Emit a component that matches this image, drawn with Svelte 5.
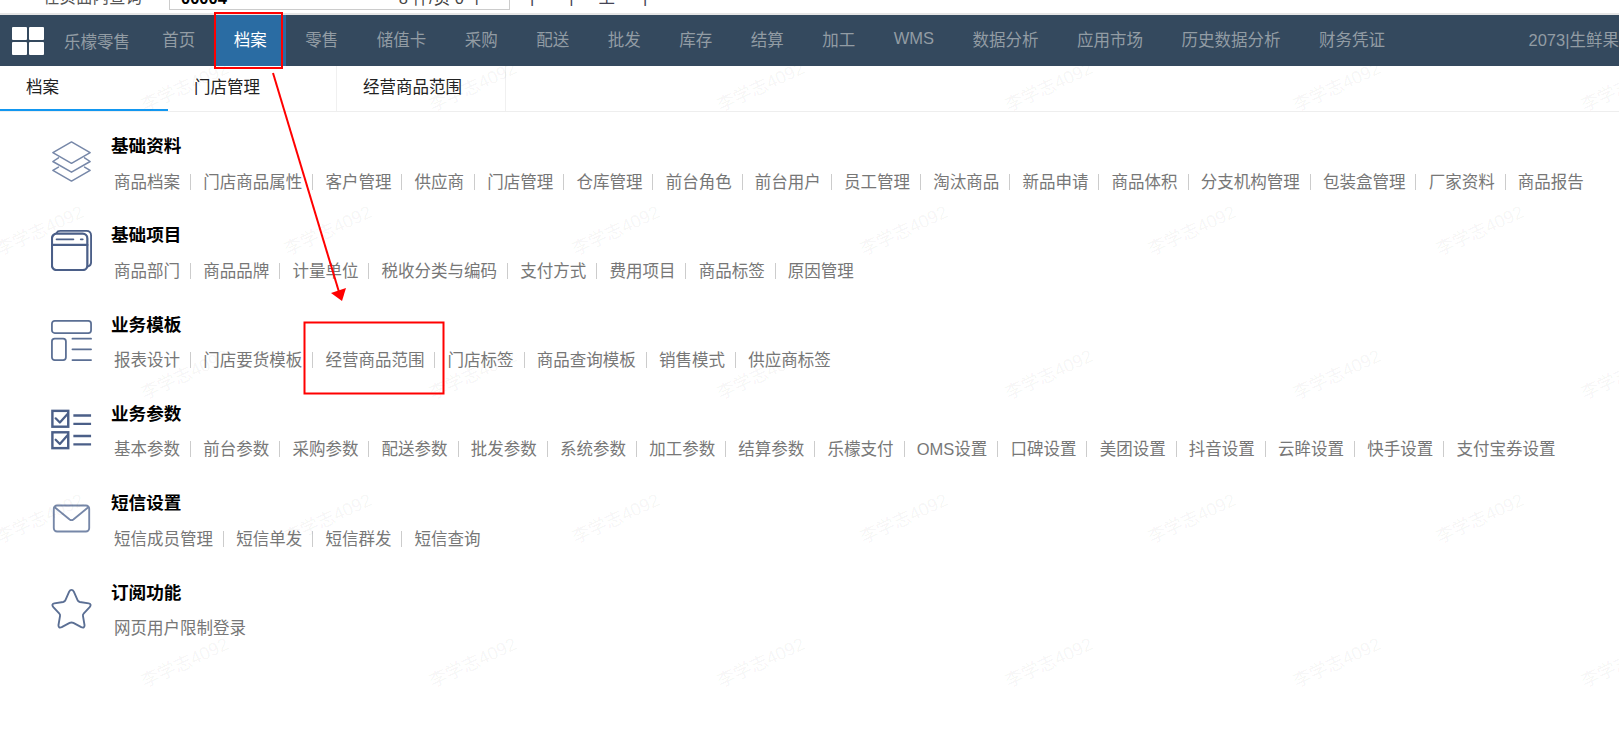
<script>
	const nav = [
		{ label: '首页' },
		{ label: '档案', active: true },
		{ label: '零售' },
		{ label: '储值卡' },
		{ label: '采购' },
		{ label: '配送' },
		{ label: '批发' },
		{ label: '库存' },
		{ label: '结算' },
		{ label: '加工' },
		{ label: 'WMS', lift: true },
		{ label: '数据分析' },
		{ label: '应用市场' },
		{ label: '历史数据分析' },
		{ label: '财务凭证' }
	]

	const groups = [
		{
			title: '基础资料',
			icon: 'layers',
			links: ['商品档案', '门店商品属性', '客户管理', '供应商', '门店管理', '仓库管理', '前台角色', '前台用户', '员工管理', '淘汰商品', '新品申请', '商品体积', '分支机构管理', '包装盒管理', '厂家资料', '商品报告']
		},
		{
			title: '基础项目',
			icon: 'window',
			links: ['商品部门', '商品品牌', '计量单位', '税收分类与编码', '支付方式', '费用项目', '商品标签', '原因管理']
		},
		{
			title: '业务模板',
			icon: 'template',
			links: ['报表设计', '门店要货模板', '经营商品范围', '门店标签', '商品查询模板', '销售模式', '供应商标签']
		},
		{
			title: '业务参数',
			icon: 'checks',
			links: ['基本参数', '前台参数', '采购参数', '配送参数', '批发参数', '系统参数', '加工参数', '结算参数', '乐檬支付', 'OMS设置', '口碑设置', '美团设置', '抖音设置', '云眸设置', '快手设置', '支付宝券设置']
		},
		{ title: '短信设置', icon: 'mail', links: ['短信成员管理', '短信单发', '短信群发', '短信查询'] },
		{ title: '订阅功能', icon: 'star', links: ['网页用户限制登录'] }
	]

	// watermark tiles, staggered rows
	const marks = []
	for (let row = 0; row < 5; row++) {
		const off = row % 2 === 1 ? -8 : 137
		for (let col = -1; col < 6; col++) {
			marks.push({ x: off + col * 288, y: 72 + row * 144 })
		}
	}
</script>

<div class="page">
	<div class="search-strip">
		<span class="search-label">在页面内查询</span>
		<div class="search-box"><b>00004</b><span>8 件/页 0 个</span></div>
		<div class="strip-rest"><span>|</span><span>|</span><span>至</span><span>|</span></div>
	</div>

	<header class="topbar">
		<div class="logo"><i></i><i></i><i></i><i></i></div>
		<span class="brand">乐檬零售</span>
		{#each nav as item}
			<span class="nav-item" class:active={item.active} class:lift={item.lift}>{item.label}</span>
		{/each}
		<span class="user">2073|生鲜果</span>
	</header>

	<div class="tabs">
		<span class="tab current">档案</span>
		<span class="tab">门店管理</span>
		<span class="tab">经营商品范围</span>
	</div>

	<main class="groups">
		{#each groups as group}
			<section class="group">
				<svg class="icon" viewBox="0 0 44 44" fill="none" stroke="#5b6f94" stroke-width="1.6" stroke-linejoin="round" stroke-linecap="round">
					{#if group.icon === 'layers'}
						<path d="M22 1 L42 12.500 L22 24 L2 12.500 Z" stroke="#7687a8" />
						<path d="M8 18 L2 22 L22 33.500 L42 22 L36 18" stroke="#7687a8" />
						<path d="M8 28 L2 31.500 L22 43 L42 31.500 L36 28" stroke="#7687a8" />
					{:else if group.icon === 'window'}
						<path d="M6 3 Q7 1 10 1 L38 1 Q43 1 43 6 L43 35 Q43 38 40 39" stroke-width="2" stroke="#4b5f88" />
						<rect x="1" y="4" width="38" height="39" rx="5" stroke-width="2.4" stroke="#4b5f88" />
						<path d="M1 16 L39 16" stroke-width="2.4" stroke="#4b5f88" />
						<path d="M6 10 L24 10" stroke-width="2" stroke="#4b5f88" />
						<path d="M32 10 L34 10" stroke-width="2" stroke="#4b5f88" />
					{:else if group.icon === 'template'}
						<rect x="1" y="1" width="42" height="13" rx="3" stroke-width="1.9" />
						<rect x="1" y="20" width="15" height="23" rx="3" stroke-width="1.9" />
						<path d="M23 20 L43 20 M23 31.500 L43 31.500 M23 43 L43 43" stroke-width="1.9" />
					{:else if group.icon === 'checks'}
						<rect x="1.500" y="2" width="17" height="17" stroke="#4b5f88" stroke-width="2.6" stroke-linejoin="miter" />
						<rect x="1.500" y="25" width="17" height="17" stroke="#4b5f88" stroke-width="2.6" stroke-linejoin="miter" />
						<path d="M5 10 L9.500 14.500 L18 5 M5 33 L9.500 37.500 L18 28" stroke="#4b5f88" stroke-width="2.4" />
						<path d="M24 7 L43 7 M24 16 L43 16 M24 29 L43 29 M24 38 L43 38" stroke="#4b5f88" stroke-width="2.6" stroke-linecap="butt" />
					{:else if group.icon === 'mail'}
						<rect x="3" y="8" width="38" height="28" rx="3.500" stroke-width="2" stroke="#7687a8" />
						<path d="M4 10 L20 23 Q22 24.500 24 23 L40 10" stroke-width="2" stroke="#7687a8" />
					{:else}
						<path d="M22 2 Q23.500 2 24.500 4 L28.500 13 Q29 14.500 31 15 L40.500 16.500 Q44 17.500 41.500 20.500 L35 27.500 Q34 28.500 34.300 30 L36 40 Q36 43.500 32.500 42 L24 37.500 Q22 36.500 20 37.500 L11.500 42 Q8 43.500 8 40 L9.700 30 Q10 28.500 9 27.500 L2.500 20.500 Q0 17.500 3.500 16.500 L13 15 Q15 14.500 15.500 13 L19.500 4 Q20.500 2 22 2 Z" stroke-width="2" />
					{/if}
				</svg>
				<div class="body">
					<h3>{group.title}</h3>
					<div class="links">
						{#each group.links as link}
							<span class="link">{link}</span>
						{/each}
					</div>
				</div>
			</section>
		{/each}
	</main>

	<div class="watermarks">
		{#each marks as m}
			<span class="mark" style="left: {m.x}px; top: {m.y}px">李学志4092</span>
		{/each}
	</div>

	<svg class="annotations" width="1619" height="741" viewBox="0 0 1619 741" fill="none">
		<rect x="215" y="13" width="67" height="55" stroke="#f00" stroke-width="2" />
		<rect x="304.500" y="322.500" width="139" height="71" stroke="#f00" stroke-width="2" />
		<path d="M273 73 L339 292" stroke="#f00" stroke-width="2" />
		<path d="M331 293 L346 288 L342 301 Z" fill="#f00" />
	</svg>
</div>

<style>
	:global(body) {
		margin: 0;
		background: #fff;
	}

	.page {
		position: relative;
		width: 1619px;
		height: 741px;
		overflow: hidden;
		font-family: "Liberation Sans", "Noto Sans CJK SC", sans-serif;
		background: #fff;
	}

	.search-strip {
		height: 13px;
		display: flex;
		align-items: flex-start;
		overflow: hidden;
		border-bottom: 2px solid #e6e6e6;
		font-size: 16.5px;
		color: #555;
		line-height: 20px;
	}

	.search-label {
		margin: -13px 0 0 43px;
		width: 126px;
		flex: none;
		white-space: nowrap;
	}

	.search-box {
		box-sizing: border-box;
		width: 341px;
		height: 23px;
		margin-top: -13px;
		flex: none;
		border: 1px solid #ccc;
		display: flex;
		justify-content: space-between;
		padding: 0 24px 0 11px;
		color: #444;
		white-space: nowrap;
	}

	.search-box b {
		color: #000;
	}

	.strip-rest {
		margin: -13px 0 0 20px;
		display: flex;
		color: #445;
	}

	.strip-rest span:nth-child(2) {
		margin-left: 35px;
	}

	.strip-rest span:nth-child(3) {
		margin-left: 25px;
	}

	.strip-rest span:nth-child(4) {
		margin-left: 28px;
	}

	.topbar {
		height: 51px;
		background: #34495e;
		display: flex;
		align-items: center;
		color: #929ca4;
		font-size: 16.5px;
		position: relative;
		z-index: 1;
	}

	.logo {
		margin-left: 12px;
		margin-right: 20px;
		width: 32px;
		height: 28px;
		flex: none;
		display: grid;
		grid-template-columns: 1fr 1fr;
		grid-template-rows: 1fr 1fr;
		gap: 2px;
	}

	.logo i {
		background: #fff;
		border-radius: 1px;
	}

	.brand {
		margin-right: 13px;
		flex: none;
		white-space: nowrap;
	}

	.nav-item {
		flex: none;
		height: 51px;
		line-height: 51px;
		padding: 0 19.25px;
		text-align: center;
		white-space: nowrap;
	}

	.nav-item.active {
		background: #2a6ca3;
		color: #fff;
	}

	.nav-item.lift {
		line-height: 46px;
	}

	.user {
		margin-left: auto;
		line-height: 51px;
		white-space: nowrap;
	}

	.tabs {
		height: 45px;
		display: flex;
		border-bottom: 1px solid #eee;
	}

	.tab {
		flex: none;
		width: 169px;
		box-sizing: border-box;
		padding-left: 26px;
		font-size: 16.5px;
		line-height: 42px;
		color: #222;
		border-right: 1px solid #f0f0f0;
	}

	.tab.current {
		width: 168px;
		border-right: none;
		border-bottom: 2px solid #1297f0;
	}

	.group {
		display: flex;
		height: 89.33px;
		padding-left: 51px;
	}

	.icon {
		width: 41px;
		height: 41px;
		flex: none;
		margin-top: 29px;
	}

	.body {
		margin-left: 19px;
		padding-top: 23px;
		min-width: 0;
	}

	h3 {
		margin: 0;
		font-size: 17.6px;
		font-weight: bold;
		color: #000;
		line-height: 22px;
	}

	.links {
		display: flex;
		margin-top: 14.5px;
		margin-left: 3px;
		font-size: 16.5px;
		line-height: 20px;
		color: #777;
		white-space: nowrap;
	}

	.link {
		padding-right: 11px;
		margin-right: 12.2px;
		position: relative;
	}

	.link:not(:last-child)::after {
		content: "";
		position: absolute;
		right: 0;
		top: 2px;
		height: 16px;
		width: 1px;
		background: #ccc;
	}

	.watermarks {
		position: absolute;
		inset: 0;
		pointer-events: none;
	}

	.mark {
		position: absolute;
		font-size: 18px;
		color: rgba(0, 0, 0, 0.05);
		transform: rotate(-25deg);
		white-space: nowrap;
	}

	.annotations {
		position: absolute;
		left: 0;
		top: 0;
		z-index: 2;
		pointer-events: none;
	}
</style>
